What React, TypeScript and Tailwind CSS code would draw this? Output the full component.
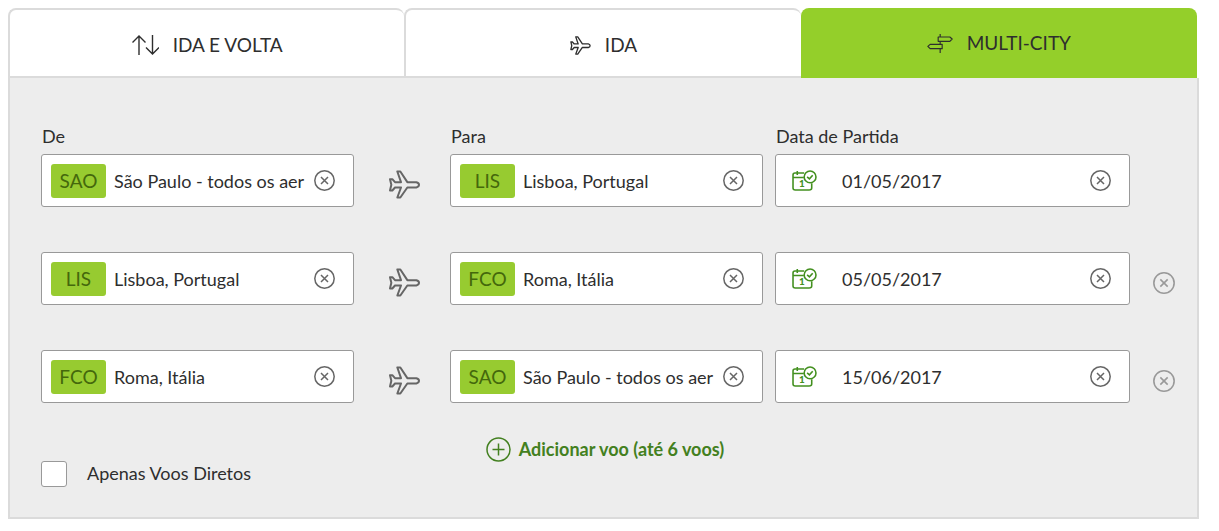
import { useState } from "react";
import type { ReactNode } from "react";

type Place = { code: string; name: string };
type Flight = { from: Place; to: Place; date: string };

const SAO = { code: "SAO", name: "São Paulo - todos os aer" };
const LIS = { code: "LIS", name: "Lisboa, Portugal" };
const FCO = { code: "FCO", name: "Roma, Itália" };

const initialFlights: Flight[] = [
  { from: SAO, to: LIS, date: "01/05/2017" },
  { from: LIS, to: FCO, date: "05/05/2017" },
  { from: FCO, to: SAO, date: "15/06/2017" },
];

function PlaneIcon({ className, stroke }: { className: string; stroke: number }) {
  return (
    <svg viewBox="0 0 93 86" className={className} fill="none" stroke="currentColor" strokeWidth={stroke} strokeLinejoin="round" aria-hidden="true">
      <path d="M3 27H10L18 36H36L25 4H34L55 36H82Q90 38 90 44Q90 50 82 52H55L34 82H25L36 52H18L10 61H3L7 44Z" />
    </svg>
  );
}

function ArrowsIcon() {
  return (
    <svg viewBox="0 0 27 20" className="w-[27px] h-5" fill="none" stroke="currentColor" strokeWidth="1.4" aria-hidden="true">
      <path d="M7 20V1M0.5 7.5L7 1L13.5 7.5M20.5 0V19M14 12.5L20.5 19L27 12.5" />
    </svg>
  );
}

function SignpostIcon() {
  return (
    <svg viewBox="22 27 77 57" className="w-[26px] h-[19px]" fill="none" stroke="currentColor" strokeWidth="3.5" strokeLinejoin="round" aria-hidden="true">
      <path d="M55 36H90L97 42L90 49H55ZM67 58H31L24 64L31 71H67ZM61 27V36M61 49V58M61 71V84" />
    </svg>
  );
}

function CalendarIcon() {
  return (
    <svg viewBox="34 29 76 64" className="w-[25px] h-[21px] shrink-0 text-[#43901f]" fill="none" stroke="currentColor" strokeWidth="4.8" aria-hidden="true">
      <path d="M71 38H43Q37 38 37 44V84Q37 90 44 90H86Q94 90 94 84V69M37 52H70M50 32V44" />
      <circle cx="89" cy="50" r="18" />
      <path d="M80 50L87 56L97 45" />
      <text x="64" y="82" textAnchor="middle" fontSize="30" fontFamily="Lato, sans-serif" fontWeight="900" fill="currentColor" stroke="none">1</text>
    </svg>
  );
}

function CircleXIcon({ className }: { className: string }) {
  return (
    <svg viewBox="0 0 21 21" className={className} fill="none" stroke="currentColor" strokeWidth="1.5" aria-hidden="true">
      <circle cx="10.5" cy="10.5" r="9.7" />
      <path d="M7 7L14 14M14 7L7 14" />
    </svg>
  );
}

function Tab({ active, icon, children }: { active?: boolean; icon: ReactNode; children: ReactNode }) {
  return (
    <button
      type="button"
      role="tab"
      aria-selected={!!active}
      className={`flex items-center justify-center gap-[14px] rounded-t-lg text-[19px] ${
        active ? "bg-[#94cf2a]" : "pt-1 border-t-2 border-l-2 border-b-2 border-[#dbdbdb] bg-white"
      }`}
    >
      {icon}
      <span>{children}</span>
    </button>
  );
}

function ClearButton({ label }: { label: string }) {
  return (
    <button type="button" aria-label={label} className="shrink-0 text-[#666]">
      <CircleXIcon className="block size-[21px]" />
    </button>
  );
}

function PlaceField({ id, place }: { id: string; place: Place }) {
  return (
    <div className="flex h-[53px] min-w-0 items-center rounded-[3px] border border-[#999] bg-white pl-[9px] pr-[18px]">
      <span className="flex h-[34px] w-[55px] shrink-0 items-center justify-center rounded-[3px] bg-[#97cb30] text-[19px] text-[#44680c]">
        {place.code}
      </span>
      <input id={id} aria-label={id} defaultValue={place.name} className="ml-2 mr-1 min-w-0 flex-1 outline-none" />
      <ClearButton label={`Limpar ${id}`} />
    </div>
  );
}

function DateField({ id, date }: { id: string; date: string }) {
  return (
    <div className="flex h-[53px] items-center rounded-[3px] border border-[#999] bg-white pl-4 pr-[18px]">
      <CalendarIcon />
      <input id={id} aria-label={id} defaultValue={date} className="ml-[25px] mr-3 min-w-0 flex-1 outline-none" />
      <ClearButton label={`Limpar ${id}`} />
    </div>
  );
}

const columns = "grid grid-cols-[minmax(0,313fr)_96px_minmax(0,313fr)_12px_minmax(0,355fr)_45px]";

export default function App() {
  const [flights, setFlights] = useState(initialFlights);

  return (
    <form className="pt-2 pl-2 pr-5 font-['Lato',sans-serif] text-[18px] leading-6 text-[#2e2e2e]">
      <div role="tablist" className="mr-[2px] grid h-[70px] grid-cols-3">
        <Tab icon={<ArrowsIcon />}>IDA E VOLTA</Tab>
        <Tab icon={<PlaneIcon className="w-[21px] h-[19px]" stroke={6} />}>IDA</Tab>
        <Tab active icon={<SignpostIcon />}>MULTI-CITY</Tab>
      </div>

      <div className="border-x-2 border-b-2 border-[#dbdbdb] bg-[#ededed] pt-[46px] pr-[22px] pb-[30px] pl-[31px]">
        <div className={`${columns} mb-[6px]`}>
          <label htmlFor="De 1" className="pl-px">De</label>
          <label htmlFor="Para 1" className="col-start-3 pl-px">Para</label>
          <label htmlFor="Data de Partida 1" className="col-start-5 pl-px">Data de Partida</label>
        </div>

        <div className="flex flex-col gap-[45px]">
          {flights.map((flight, i) => (
            <div key={i} className={columns}>
              <PlaceField id={`De ${i + 1}`} place={flight.from} />
              <div className="flex items-center justify-center pt-2 pl-1 text-[#666]">
                <PlaneIcon className="w-[31px] h-[29px]" stroke={6} />
              </div>
              <PlaceField id={`Para ${i + 1}`} place={flight.to} />
              <div className="col-start-5">
                <DateField id={`Data de Partida ${i + 1}`} date={flight.date} />
              </div>
              {i > 0 && (
                <button
                  type="button"
                  aria-label={`Remover voo ${i + 1}`}
                  onClick={() => setFlights(flights.filter((_, n) => n !== i))}
                  className="flex items-center justify-end pt-2 text-[#999]"
                >
                  <CircleXIcon className="size-[22px]" />
                </button>
              )}
            </div>
          ))}
        </div>

        <div className="mt-[34px] flex justify-center pr-[6px]">
          <button
            type="button"
            onClick={() => flights.length < 6 && setFlights([...flights, flights[flights.length - 1]])}
            className="flex h-6 items-center gap-2 font-bold text-[#438020]"
          >
            <svg viewBox="0 0 25 25" className="size-[25px]" fill="none" stroke="currentColor" strokeWidth="1.5" aria-hidden="true">
              <circle cx="12.5" cy="12.5" r="11.5" />
              <path d="M12.5 6.5V18.5M6.5 12.5H18.5" />
            </svg>
            Adicionar voo (até 6 voos)
          </button>
        </div>

        <label className="flex w-fit items-start gap-5">
          <input type="checkbox" className="size-[26px] appearance-none rounded-[3px] border border-[#999] bg-white checked:bg-[#94cf2a]" />
          Apenas Voos Diretos
        </label>
      </div>
    </form>
  );
}
